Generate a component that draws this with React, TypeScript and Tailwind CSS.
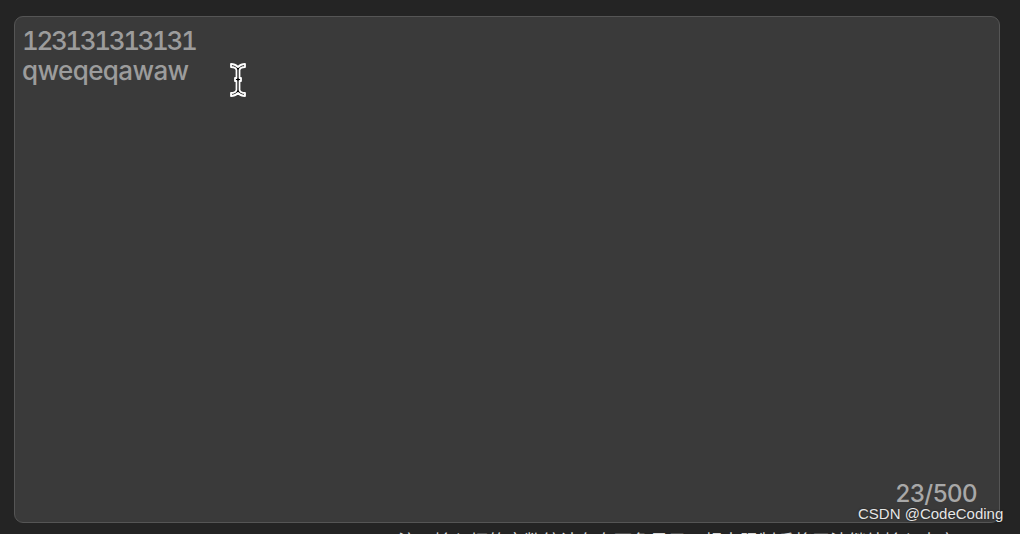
export default function App() {
  return (
    <div className="relative w-[1020px] h-[534px] overflow-hidden bg-[#242424] pl-[14px] pt-[16px] font-['Inter',sans-serif]">
      <div className="relative w-[986px] h-[507px] rounded-[9px] border-[1.5px] border-[#555555] bg-[#3a3a3a] px-[7px] pt-[9px]">
        <div className="text-[26px] leading-[30px] font-medium text-[#9c9c9c]">
          <div className="tabular-nums tracking-[-2.4px]">123131313131</div>
          <div className="tracking-[-0.6px]">qweqeqawaw</div>
        </div>
        <div className="absolute right-[22px] bottom-[13px] text-[24px] leading-[30px] font-medium text-[#a8a8a8] tracking-[-0.5px]">
          23/500
        </div>
        <svg
          className="absolute left-[212px] top-[44px]"
          width="22"
          height="38"
          viewBox="0 0 22 38"
        >
          <path
            d="M4 3 C7 3 9 4 11 6 C13 4 15 3 18 3 L18 6 C15 6 13 7 12.5 9 L12.5 17 L14 17 L14 20 L12.5 20 L12.5 29 C13 31 15 32 18 32 L18 35 C15 35 13 34 11 32 C9 34 7 35 4 35 L4 32 C7 32 9 31 9.5 29 L9.5 20 L8 20 L8 17 L9.5 17 L9.5 9 C9 7 7 6 4 6 Z"
            fill="#000"
            stroke="#fff"
            strokeWidth="1.8"
            strokeLinejoin="round"
          />
        </svg>
      </div>
      <div className="mt-[6px] pl-[384px] text-[18px] leading-[22px] text-[#d8d8d8] whitespace-nowrap font-['Noto_Sans_CJK_SC',sans-serif]">
        注：输入框的字数统计在右下角显示，超出限制后将无法继续输入内容
      </div>
      <div className="absolute left-[858px] top-[505px] text-[15px] leading-[18px] text-[#e6e6e6] font-['Liberation_Sans',sans-serif] [text-shadow:0_0_2px_rgba(0,0,0,0.6)]">
        CSDN @CodeCoding
      </div>
    </div>
  );
}
